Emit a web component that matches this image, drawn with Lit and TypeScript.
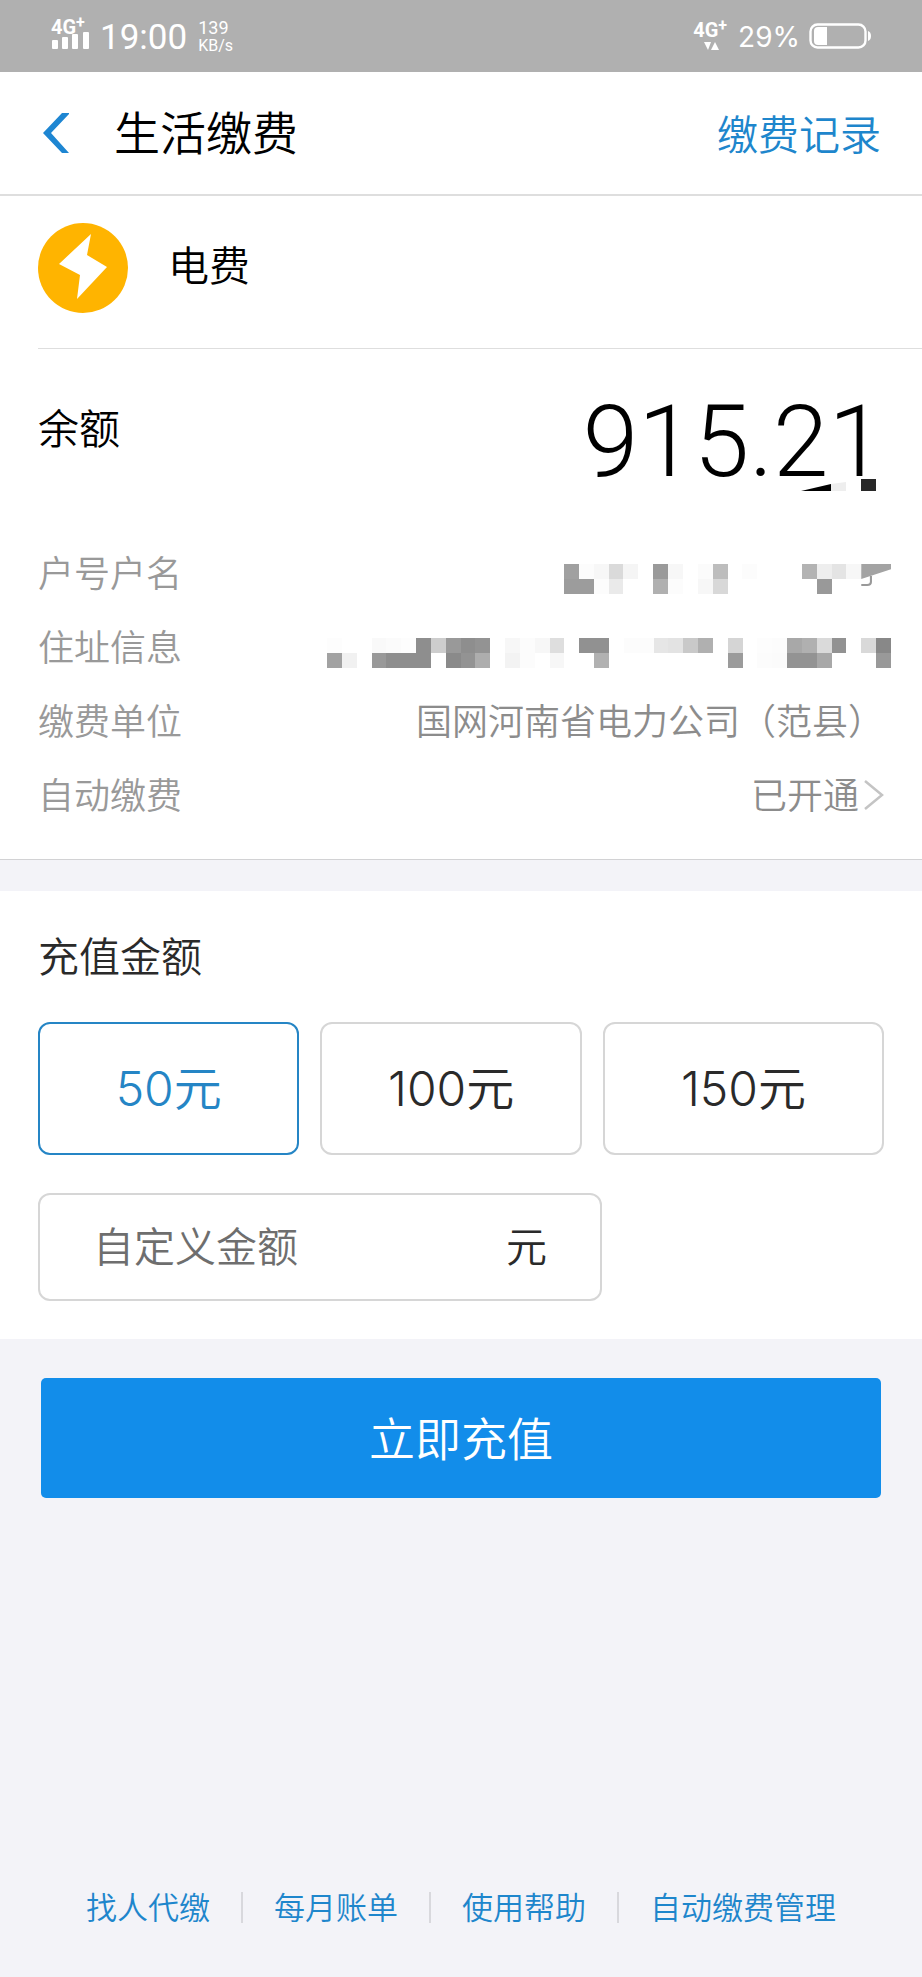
import { LitElement, html, css, svg } from "lit";
import { customElement, state } from "lit/decorators.js";
import { classMap } from "lit/directives/class-map.js";

type Cell = [column: number, row: number, color: string];

const ACCOUNT_CELLS: Cell[] = [
  [0, 0, "#a0a0a0"], [1, 0, "#fcfcfc"], [2, 0, "#f7f7f7"], [3, 0, "#dadada"],
  [4, 0, "#f5f5f5"], [6, 0, "#9a9a9a"], [7, 0, "#f7f7f7"], [9, 0, "#fbfbfb"],
  [10, 0, "#bdbdbd"], [12, 0, "#fcfcfc"], [16, 0, "#b3b3b3"], [17, 0, "#eeeeee"],
  [18, 0, "#e4e4e4"], [19, 0, "#f7f7f7"],
  [0, 1, "#9c9c9c"], [1, 1, "#9c9c9c"], [2, 1, "#fcfcfc"], [3, 1, "#eaeaea"],
  [6, 1, "#b0b0b0"], [7, 1, "#fcfcfc"], [9, 1, "#f7f7f7"], [10, 1, "#d8d8d8"],
  [17, 1, "#999999"],
];

const ADDRESS_CELLS: Cell[] = [
  [0, 0, "#fdfdfd"], [3, 0, "#f9f9f9"], [4, 0, "#fbfbfb"], [5, 0, "#fdfdfd"],
  [6, 0, "#8e8e8e"], [7, 0, "#cdcdcd"], [8, 0, "#999999"], [9, 0, "#8e8e8e"],
  [10, 0, "#939393"], [12, 0, "#f7f7f7"], [13, 0, "#fcfcfc"], [14, 0, "#f7f7f7"],
  [15, 0, "#dedede"], [17, 0, "#919191"], [18, 0, "#919191"], [20, 0, "#fcfcfc"],
  [21, 0, "#fcfcfc"], [22, 0, "#e6e6e6"], [23, 0, "#e3e3e3"], [24, 0, "#c9c9c9"],
  [25, 0, "#b0b0b0"], [27, 0, "#d5d5d5"], [29, 0, "#fdfdfd"], [30, 0, "#fcfcfc"],
  [31, 0, "#a8a8a8"], [32, 0, "#b0b0b0"], [33, 0, "#dadada"], [34, 0, "#929292"],
  [36, 0, "#d9d9d9"], [37, 0, "#888888"],
  [0, 1, "#a2a2a2"], [1, 1, "#f1f1f1"], [3, 1, "#999999"], [4, 1, "#8e8e8e"],
  [5, 1, "#8e8e8e"], [6, 1, "#8e8e8e"], [8, 1, "#8a8a8a"], [9, 1, "#939393"],
  [10, 1, "#adadad"], [12, 1, "#f3f3f3"], [13, 1, "#fcfcfc"], [15, 1, "#f7f7f7"],
  [18, 1, "#b1b1b1"], [27, 1, "#9b9b9b"], [29, 1, "#fcfcfc"], [30, 1, "#fbfbfb"],
  [31, 1, "#939393"], [32, 1, "#939393"], [33, 1, "#a8a8a8"], [37, 1, "#999999"],
];

const cells = (list: Cell[]) =>
  list.map(([x, y, color]) => svg`<rect x=${x} y=${y} width="1" height="1" fill=${color} shape-rendering="crispEdges"></rect>`);

@customElement("status-bar")
export class StatusBar extends LitElement {
  static styles = css`
    :host {
      display: flex;
      justify-content: space-between;
      align-items: flex-start;
      height: 72px;
      padding: 0 51px;
      box-sizing: border-box;
      background: #b0b0b0;
      color: #fff;
      font-family: Inter, sans-serif;
      font-weight: 400;
    }
    .side { display: flex; align-items: flex-start; }
    .network { display: grid; padding-top: 19px; line-height: 16px; }
    .network.low { padding-top: 22px; }
    .generation { font: 700 20px/16px Roboto, sans-serif; display: flex; }
    .plus { font-size: 16px; line-height: 8px; }
    .bars { margin-top: -4px; }
    .arrows { margin: 4px 0 0 11px; }
    .time { font-family: Roboto, sans-serif; font-size: 35px; line-height: 40px; margin: 18px 0 0 10px; }
    .speed { display: grid; margin: 18px 0 0 11px; font-family: Roboto, sans-serif; }
    .rate { font-size: 18px; line-height: 20px; }
    .unit { font-size: 16px; line-height: 16px; }
    .level { font-size: 28px; line-height: 32px; margin: 21px 0 0 11px; }
    .battery { margin: 23px 0 0 9px; }
  `;

  render() {
    return html`
      <div class="side">
        <div class="network">
          <span class="generation">4G<span class="plus">+</span></span>
          <svg class="bars" width="39" height="18" viewBox="0 0 39 18" fill="#fff">
            <rect x="1" y="9" width="6" height="9" rx="1"></rect>
            <rect x="11" y="6" width="6" height="12" rx="1"></rect>
            <rect x="21" y="3" width="6" height="15" rx="1"></rect>
            <rect x="32" y="1" width="6" height="17" rx="1"></rect>
          </svg>
        </div>
        <span class="time">19:00</span>
        <div class="speed"><span class="rate">139</span><span class="unit">KB/s</span></div>
      </div>
      <div class="side">
        <div class="network low">
          <span class="generation">4G<span class="plus">+</span></span>
          <svg class="arrows" width="15" height="8" viewBox="0 0 15 8" fill="#fff">
            <path d="M0 0h7L4 8zM7 8l4-8 4 8z"></path>
          </svg>
        </div>
        <span class="level">29%</span>
        <svg class="battery" width="62" height="26" viewBox="0 0 62 26">
          <rect x="1.5" y="1.5" width="55" height="23" rx="7" fill="none" stroke="#fff" stroke-width="2.4"></rect>
          <path d="M18 4H9Q5 4 5 8v10q0 4 4 4h9z" fill="#fff"></path>
          <path d="M59 8q3 1 3 5t-3 5z" fill="#fff"></path>
        </svg>
      </div>
    `;
  }
}

@customElement("app-root")
export class AppRoot extends LitElement {
  @state() private amount = 50;

  private amounts = [50, 100, 150];
  private links = ["找人代缴", "每月账单", "使用帮助", "自动缴费管理"];

  static styles = css`
    :host {
      display: flex;
      flex-direction: column;
      min-height: 100vh;
      background: #f3f3f8;
      color: #000;
      font-family: "Noto Sans CJK SC", sans-serif;
      font-weight: 350;
    }
    * { box-sizing: border-box; }
    a { color: #1e86cc; text-decoration: none; }
    button, input { font: inherit; }
    h1, h2, dl, dd, p { margin: 0; font-weight: inherit; }

    .header {
      display: flex;
      align-items: center;
      height: 124px;
      padding: 0 41px;
      background: #fff;
      border-bottom: 2px solid #dedede;
    }
    .back {
      display: flex;
      width: 28px;
      padding: 0;
      border: 0;
      background: none;
    }
    .title { flex: 1; padding: 0 0 6px 45px; font-size: 46px; line-height: 60px; }
    .records { padding-bottom: 2px; font-size: 41px; line-height: 56px; }

    .bill { background: #fff; border-bottom: 1px solid #d2d2d4; }
    .service {
      display: flex;
      align-items: flex-start;
      gap: 40px;
      height: 153px;
      margin-left: 38px;
      padding-top: 27px;
      border-bottom: 1px solid #dedede;
    }
    .service-name { font-size: 41px; line-height: 80px; }
    .balance {
      display: flex;
      justify-content: space-between;
      align-items: flex-start;
      height: 185px;
      padding: 40px 38px 0;
    }
    .balance-label { font-size: 41px; line-height: 74px; }
    .balance-value {
      position: relative;
      font-family: Roboto, sans-serif;
      font-weight: 300;
      font-size: 100px;
      line-height: 106px;
    }
    .smudge { position: absolute; right: 8px; bottom: 4px; }

    .details { padding: 0 38px 29px; font-size: 36px; color: #999; }
    .row {
      display: flex;
      justify-content: space-between;
      align-items: center;
      height: 74px;
    }
    .value { display: flex; align-items: center; color: #8c8c8c; }
    .mosaic { margin: 16px -7px 0 0; }
    .status { display: flex; align-items: center; gap: 5px; color: #8c8c8c; }
    .chevron { margin-top: 4px; }

    .recharge { margin-top: 31px; padding: 33px 38px 38px; background: #fff; color: #2a2a2a; }
    .heading { font-size: 41px; line-height: 60px; }
    .choices { display: flex; gap: 21px; margin-top: 38px; }
    .choice {
      flex: 13 1 0;
      height: 133px;
      padding: 0 0 8px;
      border: 2px solid #d6d6d6;
      border-radius: 12px;
      background: #fff;
      color: #2a2a2a;
      font-family: Inter, "Noto Sans CJK SC", sans-serif;
      font-size: 48px;
    }
    .choice:last-child { flex-grow: 14; }
    .choice.selected { border-color: #2585c5; color: #2585c5; }
    .custom {
      display: flex;
      align-items: center;
      width: calc(100% * 2 / 3);
      height: 108px;
      margin-top: 38px;
      padding: 0 53px 6px;
      border: 2px solid #d6d6d6;
      border-radius: 12px;
      font-size: 41px;
    }
    .entry {
      flex: 1;
      min-width: 0;
      padding: 0;
      border: 0;
      outline: 0;
      background: none;
      color: inherit;
    }
    .entry::placeholder { color: #6e6e6e; opacity: 1; }

    .submit {
      height: 120px;
      margin: 39px 41px 0;
      padding: 0 0 4px;
      border: 0;
      border-radius: 5px;
      background: #128dea;
      color: #fff;
      font-size: 46px;
    }
    .footer {
      display: flex;
      justify-content: center;
      align-items: center;
      margin-top: auto;
      padding-bottom: 48px;
    }
    .link { padding: 0 31px 2px; font-size: 31px; line-height: 42px; }
    .divider { width: 2px; height: 31px; background: #d8d8dd; }
  `;

  render() {
    return html`
      <status-bar></status-bar>
      <header class="header">
        <button class="back" aria-label="返回">
          <svg width="28" height="42" viewBox="0 0 28 42">
            <path d="M2 21L21 1h8L10 21l18 20h-7z" fill="#1e86d2"></path>
          </svg>
        </button>
        <h1 class="title">生活缴费</h1>
        <a class="records" href="#">缴费记录</a>
      </header>

      <section class="bill">
        <div class="service">
          <svg width="90" height="90" viewBox="0 0 90 90">
            <circle cx="45" cy="45" r="45" fill="#ffb400"></circle>
            <path d="M53 11L21 41l21 11-3 24 30-32-20-12z" fill="#fff"></path>
          </svg>
          <h2 class="service-name">电费</h2>
        </div>
        <div class="balance">
          <span class="balance-label">余额</span>
          <span class="balance-value">915.21
            <svg class="smudge" width="75" height="12" viewBox="0 0 75 12">
              <path d="M0 12L30 5v7z"></path>
              <path d="M30 5l15-2v9H30z" fill="#eee"></path>
              <path d="M60 0h15v12H60z" fill="#282828"></path>
            </svg>
          </span>
        </div>
        <dl class="details">
          <div class="row">
            <dt>户号户名</dt>
            <dd class="mosaic">
              <svg width="327" height="30" viewBox="0 0 22 2" preserveAspectRatio="none" display="block">
                ${cells(ACCOUNT_CELLS)}
                <path d="M20 0h2v.35L20 1z" fill="#a3a3a3"></path>
                <path d="M20 1.4h.4q.25 0 .25-.2V.8" fill="none" stroke="#999" stroke-width=".14"></path>
              </svg>
            </dd>
          </div>
          <div class="row">
            <dt>住址信息</dt>
            <dd class="mosaic">
              <svg width="564" height="30" viewBox="0 0 38 2" preserveAspectRatio="none" display="block">
                ${cells(ADDRESS_CELLS)}
              </svg>
            </dd>
          </div>
          <div class="row">
            <dt>缴费单位</dt>
            <dd class="value">国网河南省电力公司（范县）</dd>
          </div>
          <div class="row">
            <dt>自动缴费</dt>
            <dd>
              <a class="status" href="#">已开通
                <svg class="chevron" width="20" height="30" viewBox="0 0 20 30">
                  <path d="M1 1l17 14L1 29" fill="none" stroke="#c4c4c4" stroke-width="2.5"></path>
                </svg>
              </a>
            </dd>
          </div>
        </dl>
      </section>

      <section class="recharge">
        <h2 class="heading">充值金额</h2>
        <div class="choices">
          ${this.amounts.map(
            (value) => html`<button
              class=${classMap({ choice: true, selected: value === this.amount })}
              aria-pressed=${value === this.amount}
              @click=${() => (this.amount = value)}
            >${value}元</button>`
          )}
        </div>
        <div class="custom">
          <input class="entry" id="custom" inputmode="decimal" placeholder="自定义金额" aria-label="自定义金额" />
          <label for="custom">元</label>
        </div>
      </section>

      <button class="submit">立即充值</button>

      <nav class="footer">
        ${this.links.map(
          (text, i) => html`${i ? html`<span class="divider"></span>` : ""}<a class="link" href="#">${text}</a>`
        )}
      </nav>
    `;
  }
}
